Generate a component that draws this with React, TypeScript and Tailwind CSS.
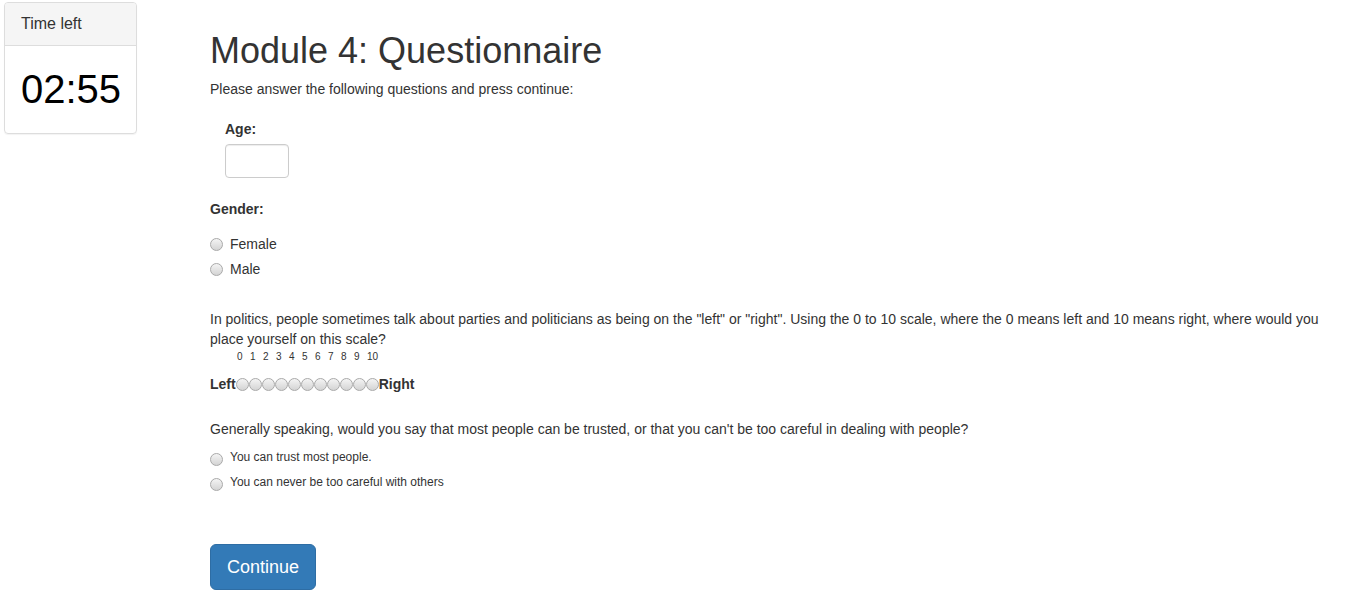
import React from "react";

const font = { fontFamily: '"Liberation Sans", Arial, Helvetica, sans-serif' };

function Radio({ className = "" }: { className?: string }) {
  return (
    <span
      className={`inline-block w-[13px] h-[13px] rounded-full border border-[#a9a9a9] bg-gradient-to-b from-[#f4f4f4] to-[#d4d4d4] shrink-0 ${className}`}
    />
  );
}

export default function App() {
  const scale = Array.from({ length: 11 }, (_, i) => i);
  return (
    <div className="flex items-start text-[#333] text-[14px] leading-[20px] bg-white min-h-[612px]" style={font}>
      <div className="ml-[4px] mt-[2px] w-[133px] border border-[#ddd] rounded-[4px] shadow-[0_1px_1px_rgba(0,0,0,0.05)] overflow-hidden">
        <div className="bg-[#f5f5f5] border-b border-[#ddd] px-[16px] py-[10px] text-[16px] leading-[22px] text-[#333]">
          Time left
        </div>
        <div className="px-[16px] py-[15px] text-[40px] leading-[57px] text-black">02:55</div>
      </div>

      <div className="ml-[73px] w-[1125px]">
        <h1 className="mt-[31px] text-[36px] leading-[40px] font-normal">Module 4: Questionnaire</h1>
        <p className="mt-[8px]">Please answer the following questions and press continue:</p>

        <div className="ml-[15px] mt-[20px]">
          <div className="font-bold">Age:</div>
          <input
            type="text"
            className="mt-[5px] block w-[64px] h-[34px] border border-[#ccc] rounded-[4px] shadow-[inset_0_1px_1px_rgba(0,0,0,0.075)] outline-none"
          />
        </div>

        <div className="mt-[21px] font-bold">Gender:</div>
        <div className="mt-[15px] flex flex-col gap-[5px]">
          {["Female", "Male"].map((g) => (
            <label key={g} className="flex items-center h-[20px]">
              <Radio />
              <span className="ml-[7px]">{g}</span>
            </label>
          ))}
        </div>

        <p className="mt-[30px]">
          In politics, people sometimes talk about parties and politicians as being on the "left" or "right". Using the 0 to 10 scale, where the 0 means left and 10 means right, where would you place yourself on this scale?
        </p>
        <div className="flex pl-[27px] text-[10px] leading-[12px] mt-[2px]">
          {scale.map((n) => (
            <span key={n} className="w-[13px] whitespace-nowrap">{n}</span>
          ))}
        </div>
        <div className="flex items-center mt-[11px] font-bold h-[20px]">
          <span>Left</span>
          {scale.map((n) => (
            <Radio key={n} className="mt-[1px]" />
          ))}
          <span>Right</span>
        </div>

        <p className="mt-[25px]">
          Generally speaking, would you say that most people can be trusted, or that you can't be too careful in dealing with people?
        </p>
        <div className="mt-[8px] flex flex-col gap-[5px] text-[12px]">
          {["You can trust most people.", "You can never be too careful with others"].map((o) => (
            <label key={o} className="flex items-center h-[20px]">
              <Radio className="mt-[4px]" />
              <span className="ml-[7px]">{o}</span>
            </label>
          ))}
        </div>

        <button className="mt-[52px] bg-[#337ab7] border border-[#2e6da4] text-white text-[18px] leading-[24px] px-[16px] py-[10px] rounded-[6px]">
          Continue
        </button>
      </div>
    </div>
  );
}
